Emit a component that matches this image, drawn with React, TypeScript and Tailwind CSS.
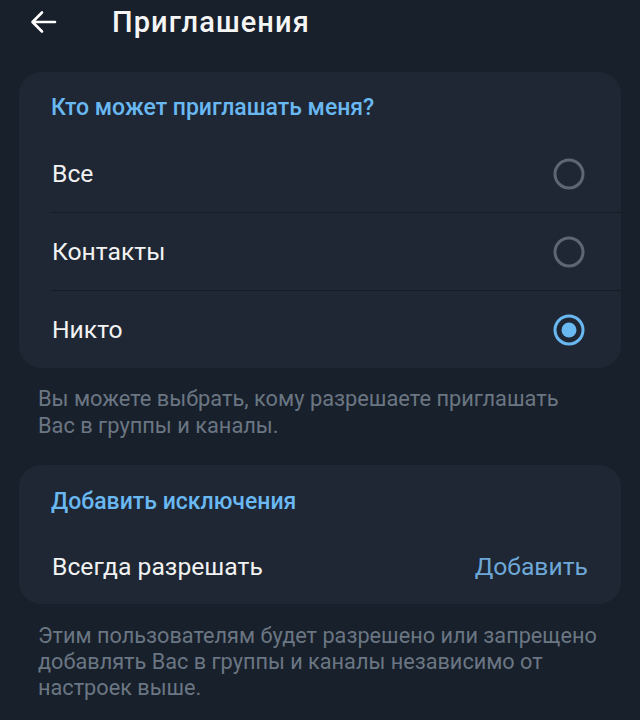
import React from "react";

function Radio({ checked }: { checked?: boolean }) {
  return (
    <svg width="34" height="34" viewBox="0 0 34 34">
      {checked ? (
        <>
          <circle cx="17" cy="17" r="14" fill="none" stroke="#6ab8f2" strokeWidth="3" />
          <circle cx="17" cy="17" r="7.5" fill="#6ab8f2" />
        </>
      ) : (
        <circle cx="17" cy="17" r="14" fill="none" stroke="#5d6671" strokeWidth="3" />
      )}
    </svg>
  );
}

export default function App() {
  const options = [
    { label: "Все", checked: false },
    { label: "Контакты", checked: false },
    { label: "Никто", checked: true },
  ];
  return (
    <div
      className="w-[640px] h-[720px] bg-[#18202b] overflow-hidden text-white"
      style={{ fontFamily: "Roboto, 'Noto Sans', sans-serif" }}
    >
      <div className="h-[44px] flex items-center">
        <div className="w-[112px] pl-[28px] flex items-center">
          <svg width="30" height="30" viewBox="0 0 30 30">
            <path
              d="M27 15 H5 M14 5.5 L4.5 15 L14 24.5"
              fill="none"
              stroke="#ffffff"
              strokeWidth="2.6"
              strokeLinecap="round"
              strokeLinejoin="round"
            />
          </svg>
        </div>
        <div className="text-[29px] font-medium leading-none tracking-[1.1px] text-[#f5f5f5]">Приглашения</div>
      </div>

      <div className="mx-[19px] mt-[28px] rounded-[22px] bg-[#1e2733]">
        <div className="pl-[32px] pt-[24px] pb-[15px] text-[23px] leading-[24px] font-medium text-[#6ab8f2]">
          Кто может приглашать меня?
        </div>
        {options.map((o, i) => (
          <div key={o.label}>
            {i > 0 && <div className="ml-[32px] h-[1px] bg-[#151c25]" />}
            <div className="h-[77px] flex items-center justify-between pl-[33px] pr-[35px]">
              <span className="text-[24.7px] text-[#f2f2f2]">{o.label}</span>
              <Radio checked={o.checked} />
            </div>
          </div>
        ))}
      </div>

      <div className="px-[38px] pt-[17px] text-[21.8px] leading-[27px] whitespace-nowrap text-[#6b7683]">
        Вы можете выбрать, кому разрешаете приглашать
        <br />
        Вас в группы и каналы.
      </div>

      <div className="mx-[19px] mt-[26px] rounded-[22px] bg-[#1e2733]">
        <div className="pl-[32px] pt-[25px] pb-[15px] text-[23px] leading-[24px] font-medium text-[#6ab8f2]">
          Добавить исключения
        </div>
        <div className="h-[75px] flex items-center justify-between pl-[33px] pr-[33px]">
          <span className="text-[24.7px] text-[#f2f2f2]">Всегда разрешать</span>
          <span className="text-[24.7px] text-[#6ea8d8]">Добавить</span>
        </div>
      </div>

      <div className="px-[38px] pt-[19px] text-[21.7px] leading-[26px] whitespace-nowrap text-[#6b7683]">
        Этим пользователям будет разрешено или запрещено
        <br />
        добавлять Вас в группы и каналы независимо от
        <br />
        настроек выше.
      </div>
    </div>
  );
}
